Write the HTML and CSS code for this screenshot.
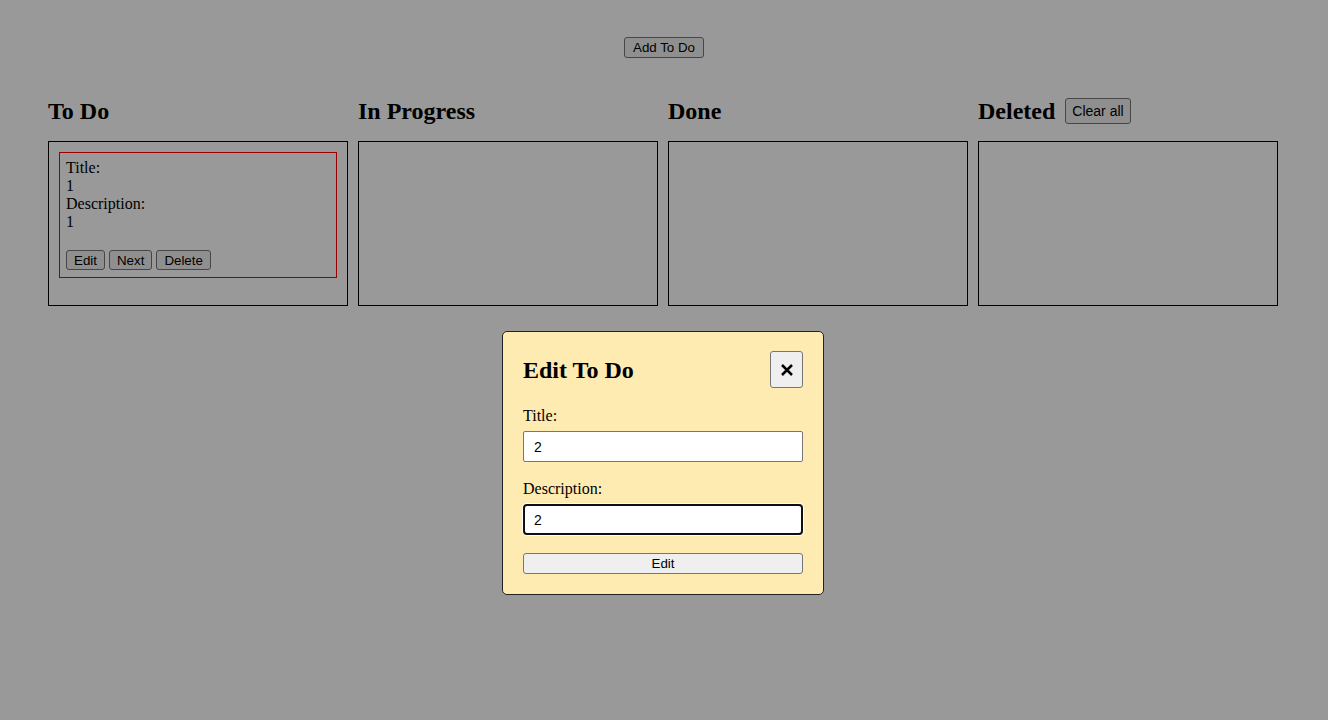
FILE: index.html
```html
<!DOCTYPE html>
<html>
<head>
<meta charset="utf-8">
<link rel="stylesheet" href="styles.css">
</head>
<body>
<div class="top">
  <button class="btn btn-add">Add To Do</button>
</div>
<div class="board">
  <div class="col">
    <div class="col-head"><h2>To Do</h2></div>
    <div class="col-box">
      <div class="card">
        <div class="line">Title:</div>
        <div class="line">1</div>
        <div class="line">Description:</div>
        <div class="line">1</div>
        <div class="card-actions">
          <button class="btn">Edit</button>
          <button class="btn">Next</button>
          <button class="btn">Delete</button>
        </div>
      </div>
    </div>
  </div>
  <div class="col">
    <div class="col-head"><h2>In Progress</h2></div>
    <div class="col-box"></div>
  </div>
  <div class="col">
    <div class="col-head"><h2>Done</h2></div>
    <div class="col-box"></div>
  </div>
  <div class="col">
    <div class="col-head"><h2>Deleted</h2><button class="btn btn-clear">Clear all</button></div>
    <div class="col-box"></div>
  </div>
</div>
<div class="overlay"></div>
<div class="modal">
  <div class="modal-head">
    <h2>Edit To Do</h2>
    <button class="close">
      <svg width="14" height="14" viewBox="0 0 14 14"><path d="M2 2 L12 12 M12 2 L2 12" stroke="#000" stroke-width="2.5" stroke-linecap="butt"/></svg>
    </button>
  </div>
  <label class="lbl">Title:</label>
  <input class="inp" type="text" value="2">
  <label class="lbl lbl2">Description:</label>
  <input class="inp focus" type="text" value="2">
  <button class="btn btn-wide">Edit</button>
</div>
</body>
</html>
```
FILE: styles.css
```css
html, body { margin: 0; padding: 0; }
body {
  background: #ffffff;
  font-family: "Liberation Serif", "Times New Roman", serif;
  font-size: 16px;
  color: #000;
  padding: 8px;
  min-height: 704px;
}
.btn {
  font-family: "Liberation Sans", Arial, sans-serif;
  font-size: 13.333px;
  background: #efefef;
  border: 1px solid #767676;
  border-radius: 3px;
  padding: 1px 7px;
  height: 21px;
  color: #000;
  line-height: normal;
}
.btn-add { padding: 1px 8px; }
.top {
  display: flex;
  justify-content: center;
  padding-top: 29px;
  margin-bottom: 39px;
}
.board {
  display: flex;
  justify-content: center;
  gap: 10px;
  padding-right: 2px;
}
.col { width: 300px; }
.col-head {
  display: flex;
  align-items: center;
  gap: 10px;
  height: 28px;
  margin-bottom: 16px;
}
h2 {
  margin: 0;
  font-size: 24px;
  font-weight: bold;
  line-height: 28px;
}
.btn-clear {
  font-size: 14px;
  height: 26px;
  padding: 0 6px;
}
.col-box {
  box-sizing: border-box;
  height: 165px;
  border: 1px solid #000;
  padding: 10px;
}
.card {
  border: 1px solid #ff0000;
  padding: 6px 6px 7px;
}
.line { line-height: 18px; }
.card-actions {
  display: flex;
  gap: 4px;
  margin-top: 19px;
}
.card-actions .btn { height: 20px; }
.overlay {
  position: fixed;
  inset: 0;
  background: rgba(0, 0, 0, 0.4);
  z-index: 1;
}
.modal {
  position: fixed;
  top: 331px;
  left: 502px;
  width: 280px;
  padding: 19px 20px 20px;
  background: #feebb1;
  border: 1px solid #222;
  border-radius: 5px;
  z-index: 2;
  display: flex;
  flex-direction: column;
}
.modal-head {
  display: flex;
  justify-content: space-between;
  align-items: center;
  height: 37px;
}
.close {
  box-sizing: border-box;
  width: 33px;
  height: 37px;
  background: #efefef;
  border: 1px solid #767676;
  border-radius: 3px;
  display: flex;
  align-items: center;
  justify-content: center;
  padding: 0;
}
.close svg { display: block; }
.lbl {
  line-height: 18px;
  margin-top: 19px;
  margin-bottom: 6px;
}
.lbl2 { margin-top: 18px; }
.inp {
  box-sizing: border-box;
  width: 280px;
  height: 31px;
  border: 1px solid #767676;
  border-radius: 2px;
  padding: 0 10px;
  font-family: "Liberation Sans", Arial, sans-serif;
  font-size: 14px;
  background: #fff;
  color: #000;
  outline: none;
  margin: 0;
}
.inp.focus {
  border: 2px solid #101010;
  border-radius: 4px;
  padding: 0 9px;
  box-shadow: 0 0 0 1px #fff;
}
.btn-wide {
  margin-top: 18px;
  width: 280px;
}
```
